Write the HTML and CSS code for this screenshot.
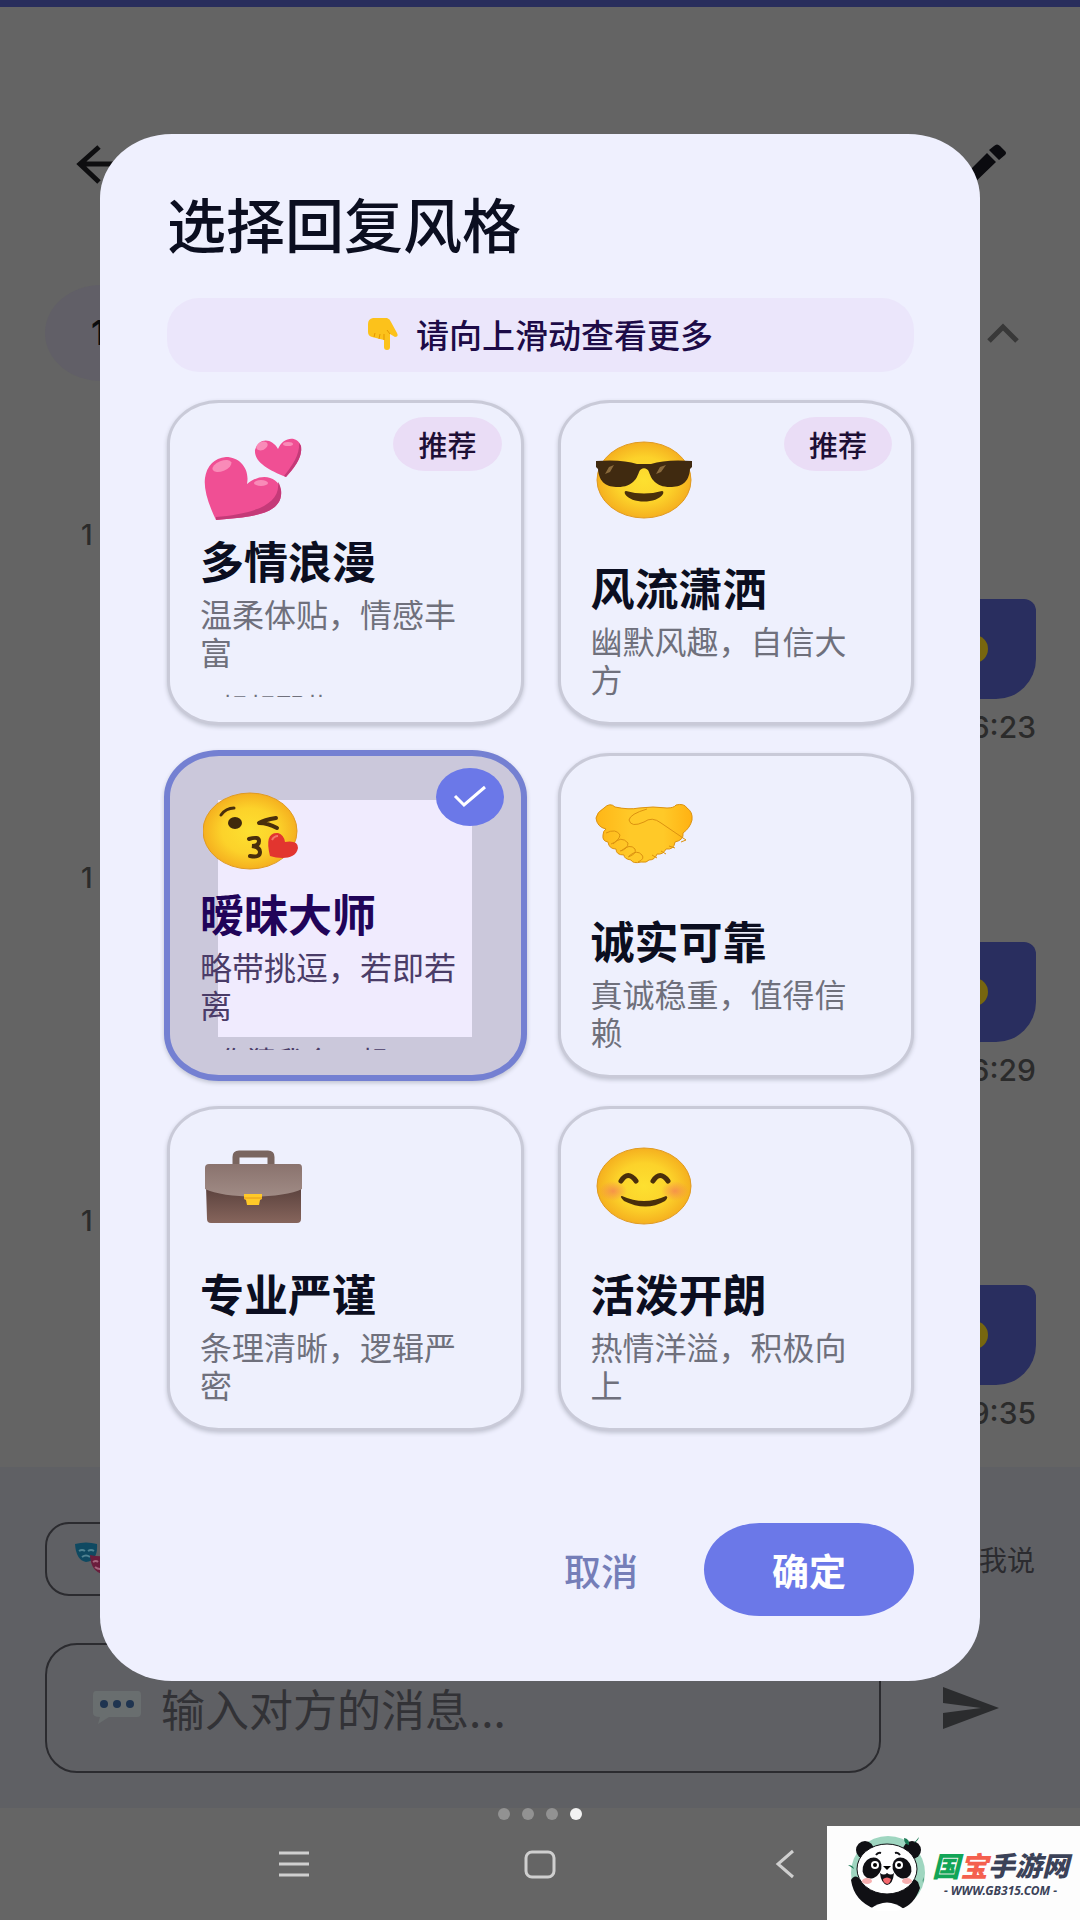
FILE: index.html
```html
<!DOCTYPE html>
<html lang="zh-CN">
<head>
<meta charset="utf-8">
<meta name="viewport" content="width=device-width, initial-scale=1">
<title>选择回复风格</title>
<link rel="stylesheet" href="styles.css">
</head>
<body>
<svg class="defs" aria-hidden="true">
  <defs>
    <radialGradient id="face"><stop offset="0" stop-color="#fde030"/><stop offset=".6" stop-color="#fcd22a"/><stop offset="1" stop-color="#f5b01f"/></radialGradient>
    <radialGradient id="blush"><stop offset="0" stop-color="#f58a4f" stop-opacity=".85"/><stop offset="1" stop-color="#f58a4f" stop-opacity="0"/></radialGradient>
    <linearGradient id="flap" x2="0" y2="1"><stop offset="0" stop-color="#8a736e"/><stop offset="1" stop-color="#a08b85"/></linearGradient>
    <linearGradient id="case" x2="0" y2="1"><stop offset="0" stop-color="#59403c"/><stop offset="1" stop-color="#86655c"/></linearGradient>
    <linearGradient id="hand"><stop offset="0" stop-color="#ffb617"/><stop offset=".35" stop-color="#ffc928"/><stop offset=".7" stop-color="#ffc928"/><stop offset="1" stop-color="#ffb112"/></linearGradient>
  </defs>
</svg>

<div class="app">
  <header class="topbar">
    <button class="icon-btn" aria-label="返回"><svg width="48" height="48" viewBox="0 0 48 48" fill="none" stroke="#0e0e10" stroke-width="5"><path d="M48 24H8M27 7 8 24l19 18"/></svg></button>
    <button class="icon-btn" aria-label="编辑"><svg width="48" height="48" viewBox="0 0 48 48" fill="#0b0b0f"><path d="M0 40v8h9l27-26-9-9zM29 10l5-4q3-3 6 0l5 5q2 2 0 4l-6 5z"/></svg></button>
  </header>
  <div class="filters">
    <span class="count">1</span>
    <button class="icon-btn" aria-label="收起"><svg width="32" height="20" viewBox="0 0 32 20" fill="none" stroke="#383838" stroke-width="5"><path d="m2 18 14-14 14 14"/></svg></button>
  </div>
  <main class="messages">
    <div class="message">
      <span class="stamp">1</span>
      <div class="bubble"><svg width="28" height="28" viewBox="0 0 28 28"><circle cx="14" cy="14" r="14" fill="#77660f"/></svg></div>
      <time class="stamp sent">16:23</time>
    </div>
    <div class="message">
      <span class="stamp">1</span>
      <div class="bubble"><svg width="28" height="28" viewBox="0 0 28 28"><circle cx="14" cy="14" r="14" fill="#77660f"/></svg></div>
      <time class="stamp sent">16:29</time>
    </div>
    <div class="message">
      <span class="stamp">1</span>
      <div class="bubble"><svg width="28" height="28" viewBox="0 0 28 28"><circle cx="14" cy="14" r="14" fill="#77660f"/></svg></div>
      <time class="stamp sent">19:35</time>
    </div>
  </main>
  <footer class="composer">
    <div class="modes">
      <button class="style-chip" aria-label="回复风格"><svg width="52" height="34" viewBox="0 0 52 34"><path d="M0 2q11-3 22 0 1 17-11 18Q1 18 0 2z" fill="#0f4961"/><path d="M4 9q3-2 6 0M13 9q3-2 6 0M7 15q4-3 8 0" fill="none" stroke="#4f8291" stroke-width="2"/><path d="M15 13q12 3 24-1 0 18-11 20-12-2-13-19z" fill="#6a1d3c"/><path d="M18 20q3-2 5 0M20 25q5 4 10 0" fill="none" stroke="#a5657d" stroke-width="2"/></svg></button>
      <span class="mode">我说</span>
    </div>
    <div class="entry">
      <label class="field">
        <svg width="48" height="36" viewBox="0 0 48 36"><path d="M3 1h42q3 0 3 4v18q0 4-4 4H16L5 34l2-7q-7 0-7-4V5q0-4 3-4z" fill="#696e6f"/><g fill="#1f3450"><circle cx="11" cy="14" r="4"/><circle cx="24" cy="14" r="4"/><circle cx="37" cy="14" r="4"/></g></svg>
        <input type="text" placeholder="输入对方的消息..." aria-label="输入对方的消息">
      </label>
      <button class="icon-btn send" aria-label="发送"><svg width="56" height="42" viewBox="0 0 56 42" fill="#2b2c2e"><path d="M0 0 56 21 0 42V26l38-5L0 16z"/></svg></button>
    </div>
  </footer>
  <nav class="sysnav" aria-label="系统导航">
    <div class="dots"><i></i><i></i><i></i><i class="on"></i></div>
    <div class="keys">
      <button class="icon-btn" aria-label="最近任务"><svg width="32" height="32" viewBox="0 0 32 32" stroke="#cfcfcf" stroke-width="3"><path d="M1 5h30M1 16h30M1 27h30"/></svg></button>
      <button class="icon-btn" aria-label="主屏幕"><svg width="32" height="32" viewBox="0 0 32 32" fill="none" stroke="#cfcfcf" stroke-width="3"><rect x="2" y="4" width="28" height="25" rx="6"/></svg></button>
      <button class="icon-btn" aria-label="返回上级"><svg width="32" height="32" viewBox="0 0 32 32" fill="none" stroke="#cfcfcf" stroke-width="3"><path d="M23 3 8 16l15 13"/></svg></button>
    </div>
  </nav>
</div>

<div class="overlay">
  <form class="dialog" role="dialog" aria-labelledby="dlg-title">
    <h1 id="dlg-title">选择回复风格</h1>
    <p class="tip"><svg width="30" height="32" viewBox="0 0 30 32"><path d="M5 0h14q3 1 4 4l6 11q2 4-2 4l-5-3v13q0 3-3 3t-3-3v-7l-12-3Q0 18 0 14V6q0-5 5-6z" fill="#fcc21b"/><path d="m6 19 1-4M11 21l1-5M16 22v-6M22 16l-3-4" fill="none" stroke="#e59600"/></svg>请向上滑动查看更多</p>

    <div class="grid" role="radiogroup" aria-labelledby="dlg-title">
      <label class="card">
        <input type="radio" name="style">
        <svg class="emoji" width="100" height="84" viewBox="0 0 100 84">
          <path d="M13 82Q0 55 2 40 5 21 23 19c14 0 24 12 21 27 14-12 31-8 34 6 3 25-31 27-65 30z" fill="#f04f94"/>
          <path d="M13 82c34-3 68-5 65-30 -1-5-2-7-3-8 3 24-28 32-62 35z" fill="#c43a78"/>
          <path d="M83 39C66 32 51 24 52 12c4-13 17-12 23-1C80-1 94-3 98 8c2 12-8 23-15 31z" fill="#f04f94"/>
          <path d="M83 39c7-8 17-19 15-31L96 5c1 12-7 23-15 33z" fill="#c43a78"/>
          <ellipse cx="19" cy="28" rx="10" ry="5" transform="rotate(-22 19 28)" fill="#f98bb8"/><ellipse cx="59" cy="8" rx="6" ry="4" transform="rotate(-25 59 8)" fill="#f98bb8"/><ellipse cx="58" cy="45" rx="7" ry="3" fill="#f98bb8"/><ellipse cx="85" cy="6" rx="5" ry="2" fill="#f98bb8"/>
        </svg>
        <span class="badge">推荐</span>
        <span class="text"><span class="name">多情浪漫</span><span class="desc">温柔体贴，情感丰富</span><span class="sample">想想那些</span></span>
      </label>

      <label class="card">
        <input type="radio" name="style">
        <svg class="emoji" width="100" height="84" viewBox="0 0 100 84">
          <ellipse cx="50" cy="42" rx="47" ry="38" fill="url(#face)" stroke="#e09a22"/>
          <path d="M2 23q26-2 41 3h14q15-5 41-3v6l-2 2c-1 14-9 18-20 18-15 0-19-9-21-15-2-5-8-5-10 0-2 6-6 15-21 15C13 49 5 45 4 31l-2-2z" fill="#402a10"/>
          <path d="m11 36 4-7 5-2-4 7zm51 0 4-7 6-2-5 7z" fill="#8a6a3c"/>
          <path d="M32 53q18 5 36 0 2 0 1 3c-6 10-32 10-38 0q-1-3 1-3z" fill="#4a2f0b"/>
        </svg>
        <span class="badge">推荐</span>
        <span class="text"><span class="name">风流潇洒</span><span class="desc">幽默风趣，自信大方</span></span>
      </label>

      <label class="card selected">
        <input type="radio" name="style" checked>
        <svg class="emoji" width="100" height="84" viewBox="0 0 100 84">
          <ellipse cx="47" cy="40" rx="47" ry="38" fill="url(#face)" stroke="#e09a22"/>
          <path d="M18 24q5-7 13-7" fill="none" stroke="#4a2f0b" stroke-width="3" stroke-linecap="round"/>
          <ellipse cx="32" cy="32" rx="7" ry="6" fill="#40290c"/>
          <path d="M73 27q-12 2-17 5 9 0 18 5" fill="none" stroke="#4a2f0b" stroke-width="4" stroke-linecap="round" stroke-linejoin="round"/>
          <path d="M46 48q10-3 10 2 0 5-7 5 8 1 8 6 0 6-10 4" fill="none" stroke="#4a2f0b" stroke-width="4" stroke-linecap="round"/>
          <path d="M67 65q-6-24 8-23 6 2 7 9 13-2 13 6c-2 12-18 11-28 8z" fill="#e2352f"/><path d="M69 49q2-4 6-4" fill="none" stroke="#f5766b" stroke-width="2"/>
        </svg>
        <span class="check"><svg width="34" height="24" viewBox="0 0 34 24" fill="none" stroke="#fff" stroke-width="3"><path d="m2 11 9 9L32 2"/></svg></span>
        <span class="text"><span class="name">暧昧大师</span><span class="desc">略带挑逗，若即若离</span><span class="sample">你猜我今天想</span></span>
      </label>

      <label class="card">
        <input type="radio" name="style">
        <svg class="emoji" width="100" height="84" viewBox="0 0 100 84">
          <g stroke="#dc9210" stroke-linejoin="round">
          <path d="M2 27Q3 21 10 17q6-6 11-1 14 3 24 1 14-2 28 0 7 0 9-3 8-2 11 3 6 4 5 12-2 8-9 13 1 7-8 9-1 8-9 7-3 6-9 5-2 6-8 6-2 3-8 2-8 2-10-2-7-1-7-5-8 0-8-6-7 0-8-7-6-1-5-7 0-4 3-6Q3 36 2 27z" fill="url(#hand)"/>
          <path d="M53 18q-17 5-18 11 2 8 15 2 8-6 17 1l25 17M12 42q10-5 14 2-1 6-9 9M19 53q8-9 15-1 0 6-8 8M27 60q9-8 14-2 2 5-7 8M35 65q8-7 13-1 3 4-4 7M92 49l-5 2M81 57l-6-2M72 63l-5-3M63 67l-5-3" fill="none"/>
          </g>
        </svg>
        <span class="text"><span class="name">诚实可靠</span><span class="desc">真诚稳重，值得信赖</span></span>
      </label>

      <label class="card">
        <input type="radio" name="style">
        <svg class="emoji" width="100" height="84" viewBox="0 0 100 84">
          <path d="M33 21V13q0-3 3-3h29q3 0 3 3v8" fill="none" stroke="#79655f" stroke-width="7"/>
          <path d="M3 42h95v33q0 4-4 4H8q-4 0-4-4z" fill="url(#case)"/>
          <path d="M6 20h90q3 0 3 4v21C80 55 22 55 2 45V24q0-4 4-4z" fill="url(#flap)"/>
          <path d="M41 50h18v5l-2 1-1 5H44l-1-5-2-1z" fill="#ffc928"/><path d="M41 54h18" stroke="#e59a1c"/>
        </svg>
        <span class="text"><span class="name">专业严谨</span><span class="desc">条理清晰，逻辑严密</span></span>
      </label>

      <label class="card">
        <input type="radio" name="style">
        <svg class="emoji" width="100" height="84" viewBox="0 0 100 84">
          <ellipse cx="50" cy="42" rx="47" ry="38" fill="url(#face)" stroke="#e09a22"/>
          <ellipse cx="19" cy="47" rx="14" ry="10" fill="url(#blush)"/><ellipse cx="81" cy="47" rx="14" ry="10" fill="url(#blush)"/>
          <path d="M27 37q7-11 15 0M59 37q7-11 15 0" fill="none" stroke="#4a2f0b" stroke-width="5" stroke-linecap="round"/>
          <path d="M28 52q22 10 44 0 3 1-1 5-19 11-41 0-5-5-2-5z" fill="#4a2f0b"/>
        </svg>
        <span class="text"><span class="name">活泼开朗</span><span class="desc">热情洋溢，积极向上</span></span>
      </label>
    </div>

    <div class="actions">
      <button type="button" class="cancel">取消</button>
      <button type="button" class="confirm">确定</button>
    </div>
  </form>
</div>

<a class="brand" href="#">
  <svg width="80" height="76" viewBox="0 0 80 76">
    <circle cx="40" cy="38" r="37" fill="#9fd6c0"/>
    <circle cx="17" cy="15" r="9" fill="#101014"/><circle cx="64" cy="15" r="9" fill="#101014"/>
    <path d="M3 45q4-7 10 0l10 10h32l3-8q7-6 12 0l2 6q-6 17-19 21-10-10-26 0Q6 66 3 45z" fill="#101014"/>
    <path d="M22 74q17-13 34 0l-8 2H30z" fill="#fff"/>
    <ellipse cx="39" cy="34" rx="30" ry="25" fill="#fff" stroke="#101014"/>
    <ellipse cx="24" cy="33" rx="9" ry="11" transform="rotate(30 24 33)" fill="#101014"/><ellipse cx="54" cy="33" rx="9" ry="11" transform="rotate(-30 54 33)" fill="#101014"/>
    <circle cx="27" cy="30" r="4" fill="#fff"/><circle cx="51" cy="30" r="4" fill="#fff"/><circle cx="27" cy="30" r="2"/><circle cx="51" cy="30" r="2"/>
    <path d="M35 31h8l-4 4z"/><path d="M32 38q4 3 7 0 4 3 7 0-1 11-7 12-6-2-7-12z" fill="#101014"/><path d="M35 44q4-3 8 0-1 5-4 5-4-1-4-5z" fill="#f4686d"/>
    <ellipse cx="19" cy="46" rx="5" ry="3" fill="#f7b0b0"/><ellipse cx="59" cy="46" rx="5" ry="3" fill="#f7b0b0"/>
    <path d="M28 20q2-3 5-2M47 18q3-1 5 2" fill="none" stroke="#101014" stroke-width="2"/>
    <path d="M56 3q6 1 5 7-5-1-5-7zM71 2q-1 4-5 6M0 30q5 0 6 4M76 42q-2 3-1 6" fill="#1c7a55"/>
  </svg>
  <span class="brand-text"><span class="brand-name"><b class="g">国</b><b class="r">宝</b>手游网</span><span class="brand-url">- WWW.GB315.COM -</span></span>
</a>
</body>
</html>
```
FILE: styles.css
```css
* { box-sizing: border-box; }
body {
  margin: 0;
  position: relative;
  font-family: "Noto Sans CJK SC", "Noto Sans", sans-serif;
  background: #646464;
  color: #0b0e20;
}
button { border: 0; padding: 0; background: none; font: inherit; color: inherit; }
svg { display: block; flex: none; }
.defs { position: absolute; width: 0; height: 0; }

/* Dimmed chat screen */
.app {
  min-height: 100vh;
  display: flex;
  flex-direction: column;
  border-top: 7px solid #282d5c;
}
.icon-btn { display: block; flex: none; }
.topbar { display: flex; justify-content: space-between; padding: 133px 72px 0; }
.filters { display: flex; align-items: center; justify-content: space-between; padding: 97px 61px 0 45px; }
.count {
  width: 180px; height: 96px; padding-left: 46px;
  border-radius: 56px / 48px;
  background: #615f67; color: #0c0c0e;
  font-family: Inter, sans-serif; font-size: 34px; line-height: 96px; font-weight: 600;
}
.messages { flex: 1; padding: 139px 44px 0 81px; }
.message { display: flex; flex-direction: column; margin-bottom: 121px; }
.message:last-child { margin-bottom: 0; }
.stamp { font-family: Inter, sans-serif; font-size: 28px; line-height: 30px; color: #2b2b2b; font-weight: 500; }
.bubble {
  align-self: flex-end;
  display: flex; align-items: center;
  width: 220px; height: 100px; padding-left: 144px;
  margin: 49px 0 13px;
  border-radius: 12px 12px 40px 36px;
  background: #292e5f;
}
.sent { align-self: flex-end; font-size: 30px; }
.composer { background: #5f6064; padding: 55px 45px 35px; }
.modes { display: flex; align-items: center; justify-content: space-between; margin-bottom: 47px; }
.style-chip { width: 260px; height: 74px; padding-left: 28px; border: 2px solid #2b2b2f; border-radius: 24px; }
.mode { font-size: 28px; line-height: 40px; color: #2b2b2f; }
.entry { display: flex; align-items: center; gap: 62px; padding-right: 36px; }
.field {
  flex: 1; min-width: 0; height: 130px;
  display: flex; align-items: center; gap: 20px;
  padding-left: 46px;
  border: 2px solid #2b2b2f; border-radius: 32px;
}
.field input { flex: 1; min-width: 0; border: 0; padding: 0; background: none; font: inherit; font-size: 44px; line-height: 60px; color: #2b2b2f; outline: 0; }
.field input::placeholder { color: #323236; opacity: 1; }
.sysnav { background: #656565; height: 112px; }
.dots { display: flex; justify-content: center; gap: 12px; }
.dots i { width: 12px; height: 12px; border-radius: 50%; background: #929292; }
.dots .on { background: #f2f2f2; }
.keys { display: flex; justify-content: center; gap: 214px; padding-top: 28px; }

/* Style picker */
.overlay { position: absolute; inset: 0; padding: 134px 100px 0; }
.dialog {
  padding: 57px 66px 65px 67px;
  border-radius: 72px / 64px;
  background: #eff0fe;
}
h1 { margin: 0 0 43px; font-size: 59px; line-height: 64px; font-weight: 500; }
.tip {
  display: flex; align-items: center; justify-content: center; gap: 18px;
  margin: 0 0 28px; height: 74px; padding-bottom: 2px;
  border-radius: 32px;
  background: #ebe6fb; color: #1d0b47;
  font-size: 33px; font-weight: 500;
}
.grid { display: grid; grid-template-columns: 1fr 1fr; gap: 28px 34px; }
.card {
  position: relative;
  display: flex; flex-direction: column; justify-content: space-between;
  min-height: 325px;
  padding: 35px 34px 25px 30px;
  border: 3px solid #c9cad8;
  border-radius: 52px / 44px;
  background: #eef0fd;
  box-shadow: 0 2px 4px #c0c3d1;
}
.card input { position: absolute; opacity: 0; margin: 0; }
.emoji { margin-left: 3px; }
.text { display: flex; flex-direction: column; }
.name { font-size: 44px; line-height: 50px; font-weight: 700; margin-bottom: 9px; }
.desc { font-size: 32px; line-height: 38px; color: #6f707c; }
.sample { height: 27px; padding: 23px 0 0 20px; overflow: hidden; font-size: 28px; line-height: 28px; color: #6f707c; white-space: nowrap; }
.badge {
  position: absolute; top: 14px; right: 19px;
  padding: 0 25px;
  border-radius: 32px / 27px;
  background: #eaddf6; color: #1d0f35;
  font-size: 29px; line-height: 54px; font-weight: 500;
}
.selected {
  margin: -3px;
  border: 6px solid #7480d2;
  border-radius: 55px / 47px;
  background: linear-gradient(#f0ebfe, #f0ebfe) 48px 44px / calc(100% - 97px) calc(100% - 82px) no-repeat #cbc8db;
}
.selected .name { color: #210459; }
.selected .desc, .selected .sample { color: #4a3c68; }
.check {
  position: absolute; top: 12px; right: 17px;
  width: 68px; height: 58px; border-radius: 50%;
  display: flex; align-items: center; justify-content: center;
  background: #6b78e8;
}
.actions { display: flex; justify-content: flex-end; align-items: center; gap: 66px; margin-top: 92px; font-size: 37px; font-weight: 500; }
.cancel { color: #757eb8; }
.confirm { width: 210px; height: 93px; border-radius: 56px / 47px; background: #6b78e8; color: #fff; font-weight: 700; }

/* Site mark */
.brand {
  position: absolute; right: 0; bottom: 0;
  width: 253px; height: 94px;
  display: flex; align-items: center; gap: 4px; padding-left: 21px;
  background: #fdfdfd; color: #3b4258; text-decoration: none;
}
.brand-text { display: flex; flex-direction: column; align-items: center; font-style: italic; font-weight: 900; }
.brand-name { display: flex; align-items: center; font-size: 27px; line-height: 36px; }
.brand-name b { font-size: 28px; font-weight: 900; }
.g { color: #12a557; }
.r { color: #f4604f; }
.brand-url { font-family: "Noto Sans", sans-serif; font-size: 12px; line-height: 16px; font-weight: 700; }
```
